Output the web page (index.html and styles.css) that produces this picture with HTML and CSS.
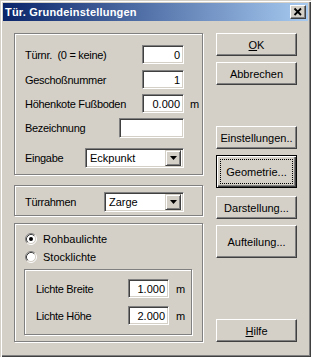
FILE: index.html
```html
<!DOCTYPE html>
<html lang="de">
<head>
  <meta charset="UTF-8"/>
  <title>Tür. Grundeinstellungen</title>
  <link rel="stylesheet" href="styles.css">
</head>
<body>
  <div class="window">
    <div class="titlebar">
      <span class="title">Tür. Grundeinstellungen</span>
      <span class="close">
        <svg width="16" height="14" viewBox="0 0 16 14">
          <path d="M4.5 3.5 L11 10 M11 3.5 L4.5 10" stroke="#000" stroke-width="1.8" fill="none"/>
        </svg>
      </span>
    </div>

    <div class="client">
      <div class="left">
        <!-- allgemeine Werte -->
        <div class="group g-main">
          <div class="row">
            <span class="label">Türnr. &nbsp;(0 = keine)</span>
            <span class="edit w-num">0</span>
            <span class="unit"></span>
          </div>
          <div class="row r2">
            <span class="label">Geschoßnummer</span>
            <span class="edit w-num">1</span>
            <span class="unit"></span>
          </div>
          <div class="row r3">
            <span class="label">Höhenkote Fußboden</span>
            <span class="edit w-num">0.000</span>
            <span class="unit">m</span>
          </div>
          <div class="row r4">
            <span class="label">Bezeichnung</span>
            <span class="edit w-name"></span>
            <span class="unit"></span>
          </div>
          <div class="row r5">
            <span class="label">Eingabe</span>
            <span class="combo w-input">
              <span class="combo-text">Eckpunkt</span>
              <span class="arrow"><svg width="7" height="4" viewBox="0 0 7 4"><path d="M0 0 H7 L3.5 4 Z" fill="#000"/></svg></span>
            </span>
            <span class="unit"></span>
          </div>
        </div>

        <!-- Türrahmen -->
        <div class="group g-frame">
          <div class="row">
            <span class="label">Türrahmen</span>
            <span class="combo w-frame">
              <span class="combo-text">Zarge</span>
              <span class="arrow"><svg width="7" height="4" viewBox="0 0 7 4"><path d="M0 0 H7 L3.5 4 Z" fill="#000"/></svg></span>
            </span>
            <span class="unit"></span>
          </div>
        </div>

        <!-- Lichte -->
        <div class="group g-light">
          <div class="radio">
            <svg width="12" height="12" viewBox="0 0 12 12">
              <circle cx="6" cy="6" r="4.5" fill="#fff"/>
              <path d="M2.11 9.89 A5.5 5.5 0 0 1 9.89 2.11" stroke="#808080" fill="none"/>
              <path d="M9.89 2.11 A5.5 5.5 0 0 1 2.11 9.89" stroke="#fff" fill="none"/>
              <path d="M2.82 9.18 A4.5 4.5 0 0 1 9.18 2.82" stroke="#404040" fill="none"/>
              <path d="M9.18 2.82 A4.5 4.5 0 0 1 2.82 9.18" stroke="#d4d0c8" fill="none"/>
              <circle cx="6" cy="6" r="2" fill="#000"/>
            </svg>
            <span>Rohbaulichte</span>
          </div>
          <div class="radio">
            <svg width="12" height="12" viewBox="0 0 12 12">
              <circle cx="6" cy="6" r="4.5" fill="#fff"/>
              <path d="M2.11 9.89 A5.5 5.5 0 0 1 9.89 2.11" stroke="#808080" fill="none"/>
              <path d="M9.89 2.11 A5.5 5.5 0 0 1 2.11 9.89" stroke="#fff" fill="none"/>
              <path d="M2.82 9.18 A4.5 4.5 0 0 1 9.18 2.82" stroke="#404040" fill="none"/>
              <path d="M9.18 2.82 A4.5 4.5 0 0 1 2.82 9.18" stroke="#d4d0c8" fill="none"/>
            </svg>
            <span>Stocklichte</span>
          </div>
          <div class="group g-inner">
            <div class="row">
              <span class="label">Lichte Breite</span>
              <span class="edit w-small">1.000</span>
              <span class="unit">m</span>
            </div>
            <div class="row r-second">
              <span class="label">Lichte Höhe</span>
              <span class="edit w-small">2.000</span>
              <span class="unit">m</span>
            </div>
          </div>
        </div>
      </div>

      <div class="buttons">
        <div class="btn b-ok"><u>O</u>K</div>
        <div class="btn b-cancel">Abbrechen</div>
        <div class="btn b-settings">Einstellungen..</div>
        <div class="btn default b-geo">Geometrie...</div>
        <div class="btn b-display">Darstellung...</div>
        <div class="btn b-split">Aufteilung...</div>
        <div class="btn b-help"><u>H</u>ilfe</div>
      </div>
    </div>
  </div>
</body>
</html>
```

FILE: styles.css
```css
* { box-sizing: border-box; }

body {
  margin: 0;
  font-family: "Liberation Sans", Arial, sans-serif;
  font-size: 11px;
  color: #000;
  background: #d4d0c8;
}

.window {
  width: 311px;
  height: 357px;
  padding: 3px;
  background: #d4d0c8;
  box-shadow: inset 1px 1px 0 #d4d0c8, inset 2px 2px 0 #fff,
              inset -1px -1px 0 #404040, inset -2px -2px 0 #808080;
}

.titlebar {
  height: 18px;
  display: flex;
  align-items: center;
  justify-content: space-between;
  padding-left: 2px;
  padding-right: 2px;
  background: linear-gradient(to right, #0a246a, #a6caf0);
}
.title {
  color: #fff;
  font-weight: bold;
  font-size: 11px;
  letter-spacing: 0.2px;
}
.close {
  width: 16px;
  height: 14px;
  display: block;
  background: #d4d0c8;
  border: 1px solid;
  border-color: #fff #404040 #404040 #fff;
  box-shadow: inset -1px -1px 0 #808080;
}
.close svg { display: block; margin: -1px 0 0 -1px; }

.client {
  display: flex;
  padding: 12px 0 0 11px;
}

.left { width: 189px; }

.group {
  border: 1px solid #808080;
  box-shadow: inset 1px 1px 0 #fff, 1px 1px 0 #fff;
}

.row {
  display: flex;
  align-items: center;
  height: 19px;
}
.label { flex: 1; white-space: nowrap; letter-spacing: -0.3px; }
.unit { width: 18px; padding-left: 6px; }

.edit {
  height: 19px;
  background: #fff;
  border: 1px solid;
  border-color: #808080 #fff #fff #808080;
  box-shadow: inset 1px 1px 0 #404040, inset -1px -1px 0 #d4d0c8;
  text-align: right;
  padding: 2px 3px 0 0;
  line-height: 14px;
}
.w-num { width: 42px; }
.w-name { width: 65px; height: 20px; }
.w-small { width: 41px; }

.combo {
  height: 20px;
  display: flex;
  align-items: center;
  background: #fff;
  border: 1px solid;
  border-color: #808080 #fff #fff #808080;
  box-shadow: inset 1px 1px 0 #404040, inset -1px -1px 0 #d4d0c8;
  padding: 2px;
}
.combo-text { flex: 1; padding-left: 2px; }
.arrow {
  width: 16px;
  height: 16px;
  display: flex;
  align-items: center;
  justify-content: center;
  background: #d4d0c8;
  border: 1px solid;
  border-color: #d4d0c8 #404040 #404040 #d4d0c8;
  box-shadow: inset 1px 1px 0 #fff, inset -1px -1px 0 #808080;
}
.arrow svg { display: block; }
.w-input { width: 99px; }
.w-frame { width: 80px; }

/* Gruppe 1 */
.g-main {
  height: 142px;
  padding: 11px 0 0 10px;
}
.r2 { margin-top: 6px; }
.r3 { margin-top: 5px; }
.r4 { margin-top: 5px; height: 20px; }
.r5 { margin-top: 10px; height: 20px; }

/* Gruppe 2 */
.g-frame {
  margin-top: 10px;
  height: 31px;
  padding: 6px 0 0 10px;
}
.g-frame .row { height: 20px; }

/* Gruppe 3 */
.g-light {
  margin-top: 7px;
  height: 119px;
  padding: 6px 0 0 10px;
}
.radio {
  display: flex;
  align-items: center;
  height: 18px;
  gap: 6px;
}
.radio svg { display: block; }

.g-inner {
  margin: 3px 0 0 -1px;
  width: 168px;
  height: 66px;
  padding: 9px 0 0 11px;
}
.g-inner .unit { width: 22px; padding-left: 7px; }
.r-second { margin-top: 8px; }

/* Schaltflächen */
.buttons {
  width: 81px;
  margin-left: 13px;
  display: flex;
  flex-direction: column;
}
.btn {
  height: 23px;
  display: flex;
  align-items: center;
  justify-content: center;
  border: 1px solid;
  border-color: #fff #404040 #404040 #fff;
  box-shadow: inset -1px -1px 0 #808080;
  white-space: nowrap;
}
.btn.default {
  border: 1px solid #000;
  box-shadow: inset 1px 1px 0 #fff, inset -1px -1px 0 #404040, inset -2px -2px 0 #808080;
  outline: 1px dotted #000;
  outline-offset: -5px;
}
.b-cancel { margin-top: 6px; }
.b-settings { margin-top: 41px; }
.b-geo { margin-top: 6px; height: 33px; }
.b-display { margin-top: 8px; }
.b-split { margin-top: 6px; height: 33px; }
.b-help { margin-top: 61px; }
```
